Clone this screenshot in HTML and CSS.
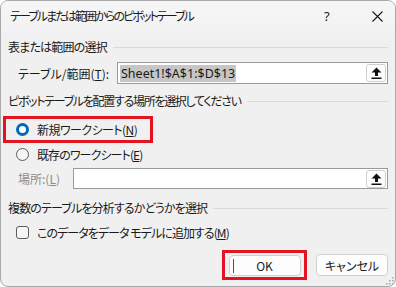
FILE: index.html
```html
<!DOCTYPE html>
<html lang="ja">
<head>
<meta charset="utf-8">
<link rel="stylesheet" href="styles.css">
</head>
<body>
<div class="dialog">
  <div class="titlebar">
    <span class="title">テーブルまたは範囲からのピボットテーブル</span>
    <span class="help">?</span>
    <svg class="close" width="11" height="11" viewBox="0 0 11 11"><path d="M0.5 0.5 L10.5 10.5 M10.5 0.5 L0.5 10.5" stroke="#1a1a1a" stroke-width="1.1" fill="none"/></svg>
  </div>
  <div class="content">
    <div class="group g1"><span class="t-g1">表または範囲の選択</span><i class="rule"></i></div>
    <div class="field f1">
      <span class="label">テーブル/範囲(<u>T</u>):</span>
      <div class="input"><span class="sel">Sheet1!$A$1:$D$13</span>
        <span class="pick"><svg width="11" height="12" viewBox="0 0 11 12"><path d="M5.5 0.5 L10.5 5.5 L7 5.5 L7 9 L4 9 L4 5.5 L0.5 5.5 Z" fill="#111"/><rect x="0.5" y="10.5" width="10" height="1.5" fill="#111"/></svg></span>
      </div>
    </div>
    <div class="group g2"><span class="t-g2">ピボットテーブルを配置する場所を選択してください</span><i class="rule"></i></div>
    <div class="mark radio-row first">
      <span class="radio on"></span><span class="t-new">新規ワークシート(<u>N</u>)</span>
    </div>
    <div class="radio-row second">
      <span class="radio"></span><span class="t-exist">既存のワークシート(<u>E</u>)</span>
    </div>
    <div class="field f2">
      <span class="label dim">場所:(<u>L</u>)</span>
      <div class="input"><span class="pick"><svg width="11" height="12" viewBox="0 0 11 12"><path d="M5.5 0.5 L10.5 5.5 L7 5.5 L7 9 L4 9 L4 5.5 L0.5 5.5 Z" fill="#111"/><rect x="0.5" y="10.5" width="10" height="1.5" fill="#111"/></svg></span></div>
    </div>
    <div class="group g3"><span class="t-g3">複数のテーブルを分析するかどうかを選択</span><i class="rule"></i></div>
    <div class="check-row">
      <span class="check"></span><span class="t-check">このデータをデータ モデルに追加する(<u>M</u>)</span>
    </div>
    <div class="buttons">
      <div class="mark okwrap"><button class="btn ok"><i class="caret"></i>OK</button></div>
      <button class="btn">キャンセル</button>
    </div>
  </div>
  <svg class="grip" width="9" height="9" viewBox="0 0 9 9"><g fill="#a8a8a8"><rect x="7" y="1" width="1.5" height="1.5"/><rect x="4" y="4" width="1.5" height="1.5"/><rect x="7" y="4" width="1.5" height="1.5"/><rect x="1" y="7" width="1.5" height="1.5"/><rect x="4" y="7" width="1.5" height="1.5"/><rect x="7" y="7" width="1.5" height="1.5"/></g></svg>
</div>
</body>
</html>
```
FILE: styles.css
```css
* { box-sizing: border-box; }
html, body { margin: 0; padding: 0; background: #ffffff; }
body {
  font-family: "Noto Sans CJK JP", "Noto Sans", sans-serif;
  font-size: 12px;
  font-feature-settings: "palt";
  color: #1a1a1a;
}
.dialog {
  position: relative;
  width: 396px;
  height: 287px;
  background: #f0f0f0;
  border: 1px solid #a9a9a9;
  border-radius: 8px;
  overflow: hidden;
}
.titlebar {
  height: 32px;
  display: flex;
  align-items: center;
  padding-left: 9px;
  background: linear-gradient(#f6f6f6, #f2f2f2);
}
.title { flex: 1; line-height: 16px; margin-top: -2px; letter-spacing: -1.9px; }
.help { font-family: "Noto Sans", sans-serif; font-size: 13px; width: 12px; margin-right: 36px; margin-top: -2px; }
.close { margin-right: 12px; margin-top: -2px; }
.content { padding: 0 7px 0 7px; display: flex; flex-direction: column; }
.group { display: flex; align-items: center; height: 16px; line-height: 16px; }
.group .rule { flex: 1; height: 1px; background: #dadada; margin-left: 6px; }
.t-g1 { letter-spacing: -0.8px; }
.t-g2 { letter-spacing: -1.3px; }
.t-g3 { letter-spacing: -0.85px; }
.t-new { letter-spacing: -0.55px; }
.t-exist { letter-spacing: -0.9px; }
.t-check { letter-spacing: -0.95px; }
.g1 { margin-top: 6px; }
.g2 { margin-top: 9px; }
.g3 { margin-top: 11px; }
.field { display: flex; align-items: center; }
.f1 { margin-top: 7px; height: 22px; }
.f2 { margin-top: 6px; height: 21px; }
.label { padding-left: 10px; }
.f1 .label { width: 109px; }
.f2 .label { width: 65px; }
.dim { color: #8c8c8c; }
.input {
  flex: 1;
  height: 100%;
  background: #ffffff;
  border: 1px solid #9a9a9a;
  display: flex;
  align-items: center;
  padding-left: 2px;
}
.sel {
  font-family: "Noto Sans", sans-serif;
  font-feature-settings: normal;
  font-size: 12.5px;
  background: #c6c6c6;
  line-height: 17px;
  padding: 0 1px;
}
.pick {
  margin-left: auto;
  margin-right: 1px;
  width: 20px;
  height: 18px;
  border: 1px solid #d0d0d0;
  border-radius: 3px;
  background: #fdfdfd;
  display: flex;
  align-items: center;
  justify-content: center;
}
.radio-row, .check-row { display: flex; align-items: center; }
.radio {
  width: 13px; height: 13px; border-radius: 50%;
  border: 1px solid #5c5c5c; background: #f5f5f5;
  margin-right: 8px;
}
.radio.on { border: 3.5px solid #0067c0; background: #ffffff; }
.mark { border: 3px solid #e3131f; }
.first {
  margin-top: 7px;
  margin-left: -5px;
  width: 150px;
  height: 27px;
  padding-left: 10px;
}
.second { margin-top: 3px; height: 16px; padding-left: 8px; }
.check-row { margin-top: 8px; height: 16px; padding-left: 8px; }
.check {
  width: 13px; height: 13px; border-radius: 3px;
  border: 1px solid #5c5c5c; background: #f5f5f5;
  margin-right: 8px;
}
.buttons { display: flex; align-items: center; justify-content: flex-end; margin-top: 10px; }
.okwrap { width: 85px; height: 30px; display: flex; align-items: center; justify-content: center; margin-right: 9px; }
.btn {
  font-family: "Noto Sans CJK JP", "Noto Sans", sans-serif;
  font-feature-settings: "palt";
  font-size: 12px;
  color: #1a1a1a;
  width: 72px;
  height: 22px;
  background: #fdfdfd;
  border: 1px solid #d0d0d0;
  border-radius: 4px;
  padding: 0;
  position: relative;
}
.ok { width: 72px; height: 21px; }
.caret { position: absolute; left: 3px; top: 3px; width: 1px; height: 14px; background: #0067c0; }
.grip { position: absolute; right: 1px; bottom: 1px; }
```
